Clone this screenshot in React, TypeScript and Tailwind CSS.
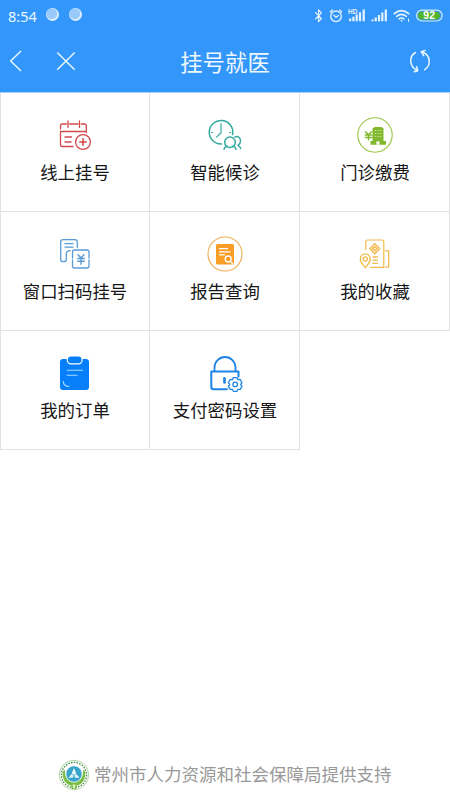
import type { ReactNode } from 'react';

function Icon({ shift = 0, color, children }: { shift?: number; color: string; children: ReactNode }) {
  return (
    <svg
      width="50"
      height="50"
      viewBox={`0 ${-shift} 50 50`}
      fill="none"
      stroke={color}
      strokeWidth="1.3"
      strokeLinecap="round"
      strokeLinejoin="round"
    >
      {children}
    </svg>
  );
}

const CalendarIcon = (
  <Icon color="#d2494d">
    <path d="M36.3 22.500v-6.500q0-2-2-2h-3M28 14h-8.500M16.500 14h-4q-2 0-2 2v3M10.500 22v12.500q0 2 2 2H23M10.500 21.500h25.800M18 11v6.500M29.500 11v6.500M15 27h6.500M15 32h6" />
    <circle cx="33" cy="32" r="7.400" />
    <path d="M29.800 32h6.400M33 28.800v6.400" strokeWidth="1.600" />
  </Icon>
);

const WaitingIcon = (
  <Icon color="#35aaa0">
    <path d="M21.500 34A11.800 11.800 0 1 1 32.600 24.500" strokeWidth="1.500" />
    <path d="M21 13.500v9.300l-4.500 4.300M11.500 22.500h1M29.500 22.500h1" strokeWidth="1.200" />
    <circle cx="30" cy="32.200" r="5.300" strokeWidth="1.500" />
    <path d="M24 39.300c.6-2 1.700-3 3.300-3M36 39.300c-.6-2-1.700-3-3.300-3M35 27c3-1.500 5.500.8 5.500 4 0 2-1 3.500-2.500 4.600 1.500.4 2.300 1.300 2.700 3" strokeWidth="1.500" />
  </Icon>
);

const HospitalFeeIcon = (
  <Icon color="#97c345">
    <circle cx="25" cy="25" r="17.200" strokeWidth="1.100" />
    <path d="M22.500 18.500l2-1.500h7l2 1.500V31H36v3.700H20.500V31h2z" fill="#82b92c" stroke="none" />
    <path d="M25 20.500h1.300M27.600 20.500h1.200M30 20.500h1.300M25 23.500h1.300M27.600 23.500h1.200M30 23.500h1.300M25 26.500h1.300M27.600 26.500h1.200M30 26.500h1.300" stroke="#dcecc2" strokeWidth=".9" strokeLinecap="butt" />
    <path d="M26.500 34.700v-3.400h3v3.400" fill="#fff" stroke="none" />
    <path d="M15.500 21.800l3 3 3-3M15.300 25h6.400M15.300 27.500h6.400M18.500 24.500v5.300" stroke="#82b92c" strokeWidth="1.500" />
  </Icon>
);

const WindowScanIcon = (
  <Icon color="#5a9bd3" shift={1}>
    <path d="M27.300 17.500V12q0-2.300-2.300-2.300H13q-2.300 0-2.300 2.300v17.500q0 2.200 2.800 2.200t2.800-2.200V24q0-3.300 4-3.300M15 13.700h8M15 17.200h8" strokeWidth="1.300" />
    <path d="M22.500 28v-6q0-2 2-2H37q2 0 2 2v6M22.500 30v6q0 2 2 2H37q2 0 2-2v-6" strokeWidth="1.300" />
    <path d="M28 24.700l3 3.300 3-3.300M27.700 28.500h6.600M27.700 31.300h6.600M31 28v6.300" strokeWidth="1.400" />
  </Icon>
);

const ReportIcon = (
  <Icon color="#f1ac55" shift={1}>
    <circle cx="25" cy="24" r="17" strokeWidth="1.100" />
    <rect x="16" y="14" width="18" height="20.500" rx="1.500" fill="#f99d27" stroke="none" />
    <path d="M19.500 18.700h8M19.500 21.800h10.500M19.500 24.800h5" stroke="#fff" strokeWidth="1.300" />
    <circle cx="28.200" cy="29" r="3" stroke="#fff" strokeWidth="1.300" />
    <path d="M30.500 31.500l2 2" stroke="#fff" strokeWidth="1.400" />
  </Icon>
);

const FavoritesIcon = (
  <Icon color="#f2b84a" shift={1}>
    <path d="M15.800 19.500V12q0-2 2-2H32q1.800 0 1.800 2v25.300H20.500M35.500 20.800h3.200v16.400h-3" strokeWidth="1.200" />
    <path d="M24.800 13.700l5 5-5 5-5-5z" />
    <path d="M22.500 18.700l2.300-2 2.300 2-2.300 2z" strokeWidth="1.500" />
    <path d="M15.300 37.500c-2.800-3.300-5-5.400-5-8.600a5 5 0 0 1 10 0c0 3.200-2.200 5.300-5 8.600z" />
    <circle cx="15.300" cy="29" r="2.100" />
    <path d="M23 27h4.500M23 30.200h4.500M23 33.400h4.500" />
  </Icon>
);

const OrdersIcon = (
  <Icon color="#0a7df7" shift={2}>
    <path d="M13 9h23q3 0 3 3v25q0 3-3 3H13q-3 0-3-3V12q0-3 3-3z" fill="#087ffa" stroke="none" />
    <rect x="17.300" y="6" width="14.800" height="7.800" rx="3.600" fill="#087ffa" stroke="#fff" strokeWidth="1.200" />
    <path d="M17 20.300h15.500M17 25.200h10" stroke="#a7dcff" strokeWidth="1.100" />
    <path d="M13.300 31.500q.2 4.800 5.700 5" stroke="#a7dcff" strokeWidth="1.200" />
  </Icon>
);

const LockIcon = (
  <Icon color="#1c84e4" shift={2}>
    <path d="M14.500 21v-3.500a10.500 10.500 0 0 1 21 0V21" strokeWidth="1.800" />
    <path d="M38.500 26.500v-5H11.300V37q0 2.300 2.300 2.300H27" strokeWidth="2" />
    <path d="M24.500 28.200v4.300" strokeWidth="2.600" />
    <path d="M33.400 27.600h3.600l1 2 2.200-.1 1.800 3.200-1.300 1.800 1.300 1.800-1.800 3.100-2.200-.1-1 2h-3.600l-1-2-2.200.1-1.800-3.100 1.300-1.800-1.300-1.800 1.800-3.200 2.200.1z" strokeWidth="1.300" />
    <circle cx="35.200" cy="34.400" r="2.300" strokeWidth="1.300" />
  </Icon>
);

const items: { label: string; icon: ReactNode }[] = [
  { label: '线上挂号', icon: CalendarIcon },
  { label: '智能候诊', icon: WaitingIcon },
  { label: '门诊缴费', icon: HospitalFeeIcon },
  { label: '窗口扫码挂号', icon: WindowScanIcon },
  { label: '报告查询', icon: ReportIcon },
  { label: '我的收藏', icon: FavoritesIcon },
  { label: '我的订单', icon: OrdersIcon },
  { label: '支付密码设置', icon: LockIcon },
];

function StatusBar() {
  return (
    <div className="flex h-[31px] items-center pl-2 pr-[7px]">
      <span className="w-[38px] pt-[2px] font-['Noto_Sans',sans-serif] text-[14.500px] leading-none text-[#eaf6ff]">8:54</span>
      <div className="flex gap-[10px] pb-[2px]">
        {[0, 1].map((n) => (
          <svg key={n} width="13" height="13" viewBox="0 0 13 13">
            <circle cx="6.500" cy="6.500" r="6.500" fill="#dceeff" />
            <circle cx="5.700" cy="5.700" r="5.500" fill="#9ac9fb" />
          </svg>
        ))}
      </div>
      <svg className="ml-auto" width="129" height="24" viewBox="314 3.500 129 24" fill="none" stroke="#e6f4ff" strokeWidth="1.300" strokeLinecap="round" strokeLinejoin="round">
        <path d="M315.500 12.200l6 6-3 3V9.300l3 3-6 6" strokeWidth="1.200" />
        <circle cx="336" cy="15.800" r="5.300" />
        <path d="M330.300 11.500l2-2M341.700 11.500l-2-2M333.700 14.600l2.300 2.200 2.400-1.800" />
        <text x="348" y="13" fill="#e6f4ff" stroke="none" fontFamily="Liberation Sans, sans-serif" fontWeight="bold" fontSize="6.500">HD</text>
        <g strokeWidth="2.200" strokeLinecap="butt">
          <path d="M350.200 18v2.700M353.400 16.300v4.400M356.700 14v6.700M360 11.700v9M363.700 9v11.700" />
          <path d="M372.500 19v1.700M375.700 17v3.700M379 14.500v6.200M382.300 12v8.700M385.800 9v11.700" />
        </g>
        <path d="M394.300 13.200q7.200-6.300 14.400 0M396.700 15.800q4.800-3.700 9.600 0M399.200 18.300q2.300-1.600 4.600 0" strokeWidth="1.700" />
        <circle cx="401.500" cy="20.200" r=".9" fill="#e6f4ff" stroke="none" />
        <path d="M408.500 18.500v2.500" strokeWidth="1" />
        <rect x="416.600" y="9.700" width="25.600" height="10.800" rx="5.400" stroke="#d4edf8" strokeWidth="1.200" />
        <path d="M422 11.200h14q3.900 0 3.900 3.900t-3.900 3.900h-14q-3.900 0-3.900-3.900t3.900-3.900z" fill="#51b52a" stroke="none" />
        <text x="429.200" y="18.900" textAnchor="middle" fill="#fff" stroke="none" fontFamily="Liberation Sans, sans-serif" fontWeight="bold" fontSize="10.500">92</text>
      </svg>
    </div>
  );
}

function NavBar() {
  return (
    <div className="grid h-[60px] grid-cols-[90px_1fr_90px] items-center">
      <svg width="90" height="60" viewBox="0 31 90 60" fill="none" stroke="#e6f7ff" strokeWidth="1.500">
        <path d="M21 51l-10.300 10L21 71M57.200 52.500l17.500 17.300M74.700 52.500L57.200 69.800" />
      </svg>
      <h1 className="text-center text-[22.400px] leading-[60px] font-normal text-[#eff8ff]">挂号就医</h1>
      <svg width="90" height="60" viewBox="360 31 90 60" fill="none" stroke="#eaf8ff" strokeWidth="1.500" strokeLinecap="round" strokeLinejoin="round">
        <path d="M415.500 52.500c-6.300 3.700-7 13.500 1.700 18M416.700 66.800l1 4-3.500 1M424.500 69.800c6.300-4 7-13.800-1.800-17.800M423.700 55.600l-2.500-3.900 4-1.300" />
      </svg>
    </div>
  );
}

function SupportBadge() {
  return (
    <svg width="32" height="32" viewBox="0 0 32 32" fill="none">
      <circle cx="16" cy="16" r="14.700" fill="#fff" stroke="#9cc78d" strokeWidth=".8" />
      <circle cx="16" cy="16" r="12.600" stroke="#408842" strokeWidth="1.300" strokeDasharray="1.500 1.300" />
      <path d="M5 12c-1.500 8 3 13.500 8 14.500l1 3.500h4l1-3.500c5-1 9.500-6.500 8-14.500l-2-1c.5 7-3 12-9 12S6.500 18 7 11z" fill="#78bd44" />
      <circle cx="16" cy="15" r="8.200" fill="#35a3ca" stroke="#fff" strokeWidth=".8" />
      <path d="M16 9l2.300 5.300L16 16l-2.300-1.700zM10.500 19l3-4 2 1.300-.3 2.300zM21.500 19l-3-4-2 1.300.3 2.300z" fill="#e8f8fc" />
      <path d="M14.500 25.500h3l-.7 4h-1.600z" fill="#e2f0c5" />
    </svg>
  );
}

export default function App() {
  return (
    <main className="flex h-[800px] w-[450px] flex-col overflow-hidden bg-white font-['Noto_Sans_CJK_SC',sans-serif]">
      <header className="h-[93px] shrink-0 border-b border-[#a9d1fb] bg-[#3296fa]">
        <StatusBar />
        <NavBar />
      </header>
      <div className="grid grid-cols-3">
        {items.map(({ label, icon }, index) => (
          <button
            key={label}
            type="button"
            className={`flex h-[119px] flex-col items-center border-r border-b border-[#e2e2e2] pt-[17px] ${index % 3 === 0 ? 'border-l' : 'pl-px'}`}
          >
            {icon}
            <span className="text-[17.400px] leading-6 whitespace-nowrap text-[#161616]">{label}</span>
          </button>
        ))}
      </div>
      <footer className="mt-auto flex h-[50px] items-center gap-[4px] pl-[58px]">
        <SupportBadge />
        <span className="pb-[2px] text-[17.500px] leading-6 whitespace-nowrap text-[#999]">常州市人力资源和社会保障局提供支持</span>
      </footer>
    </main>
  );
}
